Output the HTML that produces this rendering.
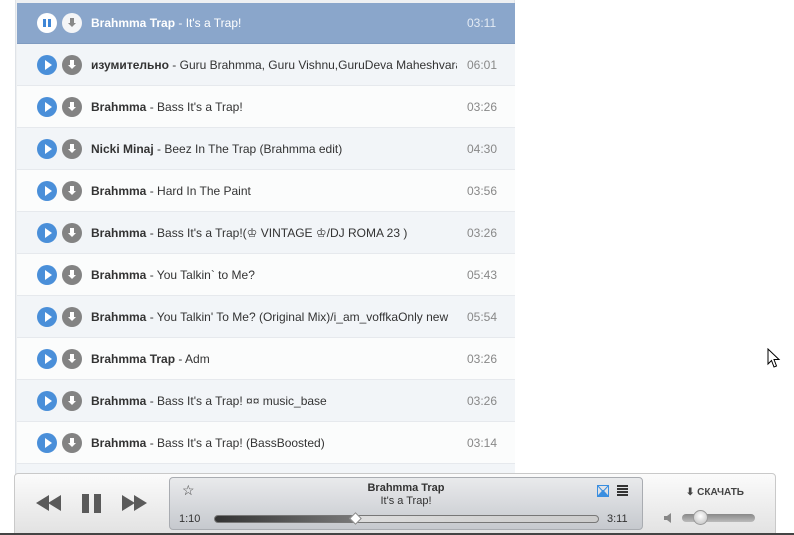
<!DOCTYPE html>
<html><head><meta charset="utf-8"><style>
*{margin:0;padding:0;box-sizing:border-box}
body{width:794px;height:535px;overflow:hidden;background:#fff;font-family:"Liberation Sans",Arial,sans-serif;position:relative}
#list{position:absolute;left:15px;top:0;width:500px;height:475px;border-left:1px solid #dfe3e8;border-right:1px solid #dfe3e8;background:#eef0f2}
.row{position:absolute;left:1px;width:498px;height:42px;border-bottom:1px solid #e6e9ed;font-size:12px;color:#333}
.row.a{background:#f2f5f8}.row.b{background:#fbfcfc}
.row.cur{background:#8aa6cb;color:#fff;border-bottom:1px solid #7f9bc0}
.pl{position:absolute;left:20px;top:11px;width:20px;height:20px;border-radius:50%;background:#4a8fd9}
.pl:after{content:"";position:absolute;left:8px;top:5px;border-left:7px solid #fff;border-top:5px solid transparent;border-bottom:5px solid transparent}
.dl{position:absolute;left:45px;top:11px;width:20px;height:20px;border-radius:50%;background:#838383}
.dl:before{content:"";position:absolute;left:8px;top:5px;width:4px;height:5px;background:#fff}
.dl:after{content:"";position:absolute;left:6px;top:10px;border-top:4px solid #fff;border-left:4px solid transparent;border-right:4px solid transparent}
.cur .pl,.cur .dl{top:10px}
.cur .pl{background:#fff}.cur .pl:after{display:none}
.cur .pl i{position:absolute;top:6px;width:3px;height:8px;background:#3f86d6}
.cur .dl{background:#f4f5f7}.cur .dl:before{background:#888}.cur .dl:after{border-top-color:#888}
.t{position:absolute;left:74px;top:14px;width:366px;white-space:nowrap;overflow:hidden;line-height:14px}
.t b{font-weight:bold}
.d{position:absolute;left:450px;top:14px;color:#888;line-height:14px}
.cur .t,.cur .d{top:13px}
.cur .d{color:#e4ebf4}
#player{position:absolute;left:14px;top:473px;width:762px;height:62px;border:1px solid #c9c9c9;border-radius:4px 4px 0 0;background:linear-gradient(#fbfbfb,#e2e2e2)}
#strip{position:absolute;left:0;top:533px;width:794px;height:2px;background:#444}
#panel{position:absolute;left:169px;top:477px;width:474px;height:53px;border:1px solid #a9acb1;border-radius:4px;background:linear-gradient(#e9eaec,#c6c9ce);font-size:11px;color:#333}
</style></head><body>
<div id="list">
<div class="row cur" style="top:3px;height:41px"><div class="pl"><i style="left:6px"></i><i style="left:11px"></i></div><div class="dl"></div><div class="t"><b>Brahmma Trap</b> - It's a Trap!</div><div class="d">03:11</div></div>
<div class="row a" style="top:44px"><div class="pl"></div><div class="dl"></div><div class="t"><b>изумительно</b> - Guru Brahmma, Guru Vishnu,GuruDeva Maheshvara</div><div class="d">06:01</div></div>
<div class="row b" style="top:86px"><div class="pl"></div><div class="dl"></div><div class="t"><b>Brahmma</b> - Bass It's a Trap!</div><div class="d">03:26</div></div>
<div class="row a" style="top:128px"><div class="pl"></div><div class="dl"></div><div class="t"><b>Nicki Minaj</b> - Beez In The Trap (Brahmma edit)</div><div class="d">04:30</div></div>
<div class="row b" style="top:170px"><div class="pl"></div><div class="dl"></div><div class="t"><b>Brahmma</b> - Hard In The Paint</div><div class="d">03:56</div></div>
<div class="row a" style="top:212px"><div class="pl"></div><div class="dl"></div><div class="t"><b>Brahmma</b> - Bass It's a Trap!(♔ VINTAGE ♔/DJ ROMA 23 )</div><div class="d">03:26</div></div>
<div class="row b" style="top:254px"><div class="pl"></div><div class="dl"></div><div class="t"><b>Brahmma</b> - You Talkin` to Me?</div><div class="d">05:43</div></div>
<div class="row a" style="top:296px"><div class="pl"></div><div class="dl"></div><div class="t"><b>Brahmma</b> - You Talkin' To Me? (Original Mix)/i_am_voffkaOnly new</div><div class="d">05:54</div></div>
<div class="row b" style="top:338px"><div class="pl"></div><div class="dl"></div><div class="t"><b>Brahmma Trap</b> - Adm</div><div class="d">03:26</div></div>
<div class="row a" style="top:380px"><div class="pl"></div><div class="dl"></div><div class="t"><b>Brahmma</b> - Bass It's a Trap! ¤¤ music_base</div><div class="d">03:26</div></div>
<div class="row b" style="top:422px"><div class="pl"></div><div class="dl"></div><div class="t"><b>Brahmma</b> - Bass It's a Trap! (BassBoosted)</div><div class="d">03:14</div></div>
<div class="row a" style="top:464px"></div>
</div>
<div id="player">
<svg style="position:absolute;left:21px;top:20px" width="115" height="20">
<polygon points="0,9 13,1 13,17" fill="#5a5a5a"/><polygon points="12,9 25,1 25,17" fill="#5a5a5a"/>
<rect x="46" y="0" width="7" height="19" fill="#5a5a5a"/><rect x="58" y="0" width="7" height="19" fill="#5a5a5a"/>
<polygon points="86,1 99,9 86,17" fill="#5a5a5a"/><polygon points="98,1 111,9 98,17" fill="#5a5a5a"/>
</svg>
<div style="position:absolute;left:671px;top:13px;font-size:10px;font-weight:bold;color:#444">⬇ СКАЧАТЬ</div>
<svg style="position:absolute;left:648px;top:39px" width="10" height="10"><rect x="1" y="3" width="3" height="4" fill="#888"/><polygon points="4,3 8,0 8,10 4,7" fill="#888"/></svg>
<div style="position:absolute;left:667px;top:40px;width:73px;height:8px;border-radius:4px;background:linear-gradient(#888,#bbb)"></div>
<div style="position:absolute;left:678px;top:36px;width:15px;height:15px;border-radius:50%;background:radial-gradient(circle at 50% 40%,#fff,#bbb);border:1px solid #999"></div>
</div>
<div id="panel">
<div style="position:absolute;left:12px;top:4px;font-size:14px;color:#444">☆</div>
<div style="position:absolute;left:0;width:100%;top:4px;text-align:center;font-weight:bold;font-size:11px">Brahmma Trap</div>
<div style="position:absolute;left:0;width:100%;top:17px;text-align:center;font-size:11px">It's a Trap!</div>
<svg style="position:absolute;left:427px;top:7px" width="12" height="12"><path d="M0.5,0 L0.5,12 M11.5,0 L11.5,12 M0.5,0.5 L11.5,0.5 L6,6.5 Z" fill="none" stroke="#3a8ee0"/><path d="M0.5,11.5 L6,5.5 L11.5,11.5 Z" fill="#3a8ee0" stroke="#3a8ee0"/></svg>
<div style="position:absolute;left:447px;top:7px;width:11px;height:11px;background:repeating-linear-gradient(#333 0 2px,transparent 2px 3px)"></div>
<div style="position:absolute;left:9px;top:35px">1:10</div>
<div style="position:absolute;left:437px;top:35px">3:11</div>
<div style="position:absolute;left:44px;top:37px;width:385px;height:8px;border-radius:4px;border:1px solid #777;background:linear-gradient(90deg,#333,#777 36%,#ddd 36%,#ccc)"></div>
<div style="position:absolute;left:181px;top:36px;width:9px;height:9px;background:#fff;border:1px solid #888;transform:rotate(45deg)"></div>
</div>
<div id="strip"></div>
<svg style="position:absolute;left:767px;top:348px" width="14" height="22"><path d="M1,1 L1,16 L4.5,12.5 L7,19 L9.5,18 L7,11.5 L12,11.5 Z" fill="#fff" stroke="#000" stroke-width="1"/></svg>
</body></html>
